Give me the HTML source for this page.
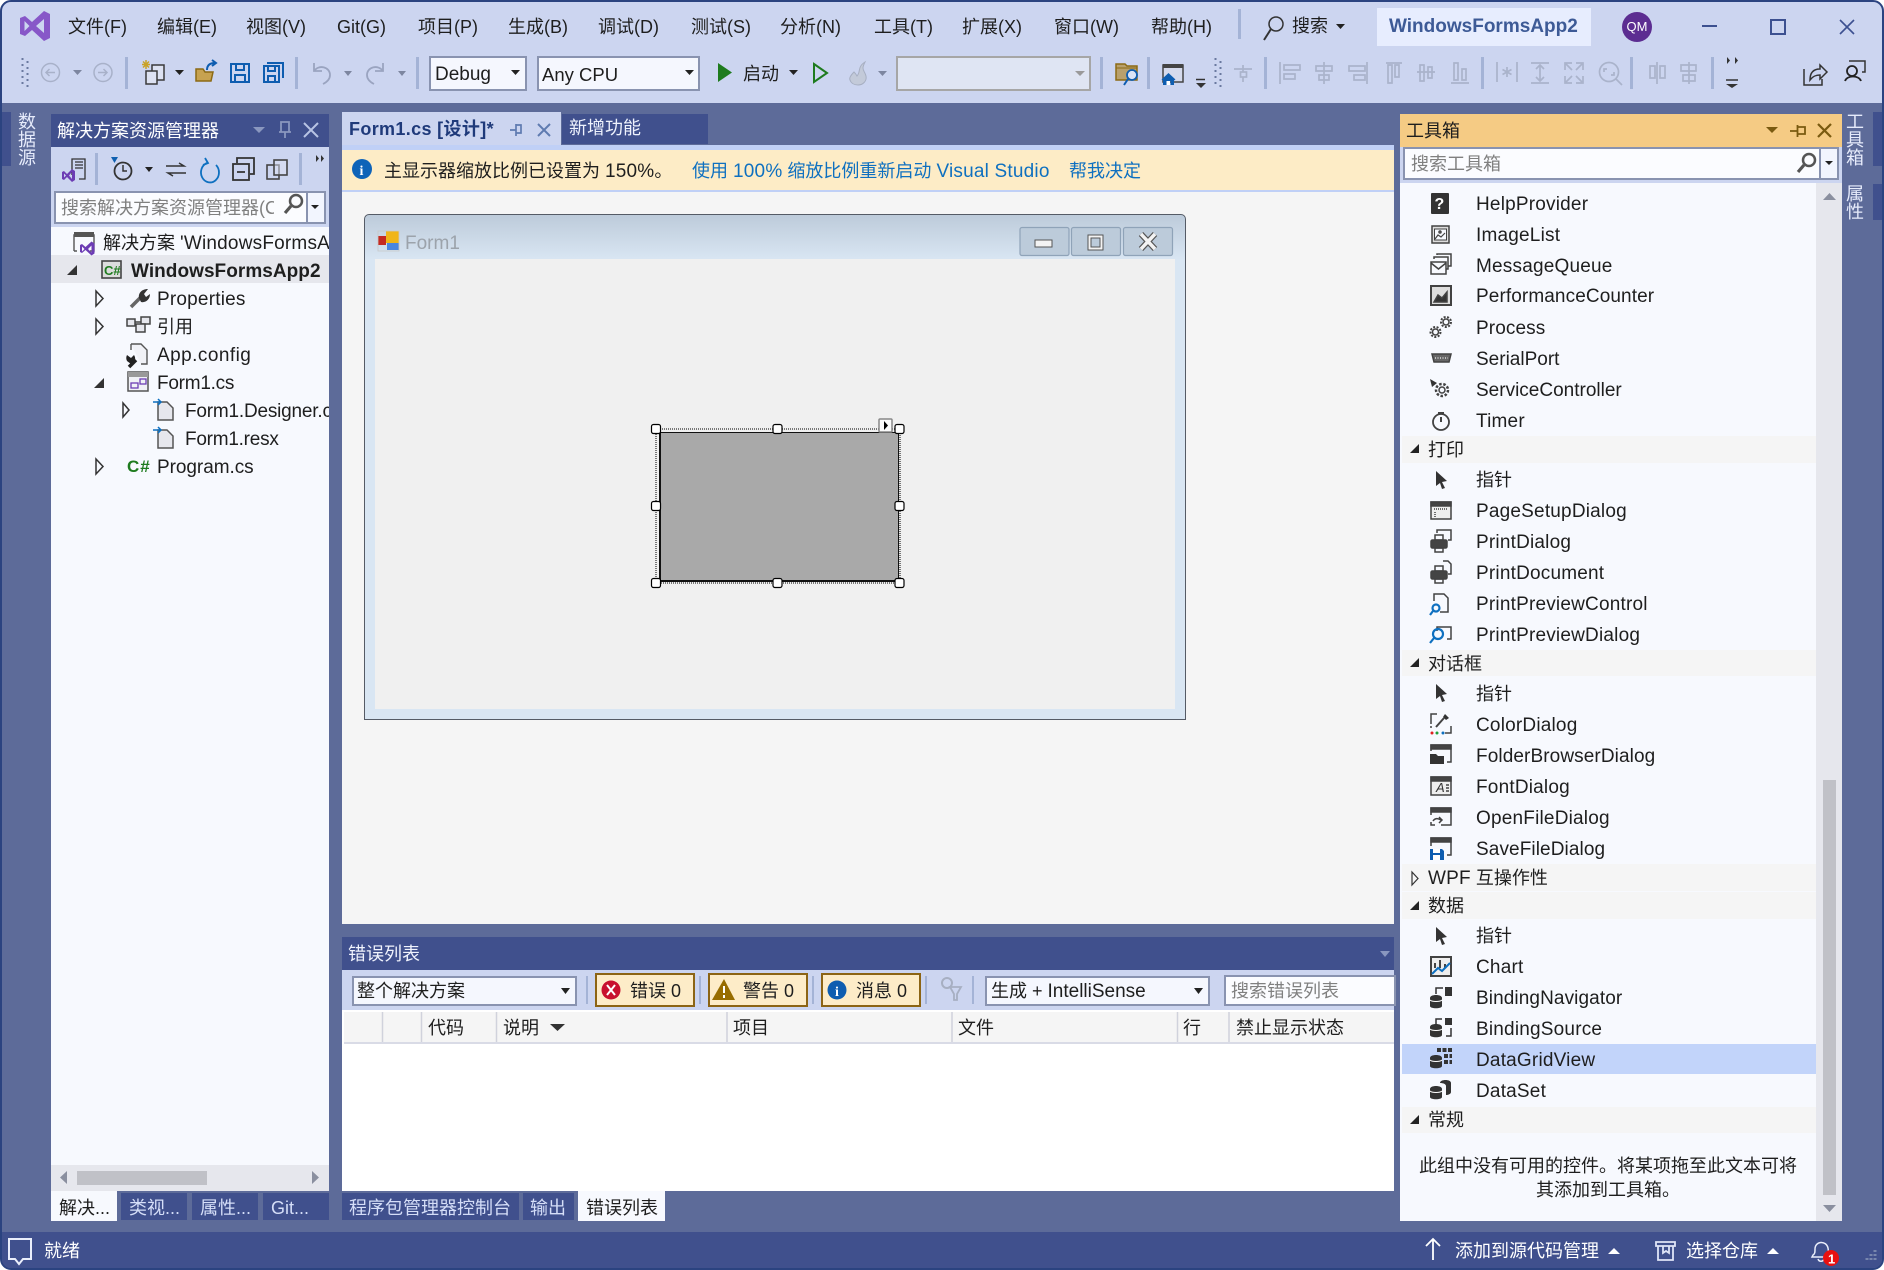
<!DOCTYPE html>
<html lang="zh"><head><meta charset="utf-8"><title>WindowsFormsApp2</title>
<style>
html,body{margin:0;padding:0;background:#fff}
body{width:1884px;height:1270px;overflow:hidden;position:relative;font-family:"Liberation Sans","Noto Sans CJK SC",sans-serif;font-size:18px;color:#1e1e1e}
#w{position:absolute;left:0;top:0;width:1884px;height:1270px;background:#5d6b99;border-radius:11px;overflow:hidden;box-sizing:border-box;border:2px solid #2b4380}
#in{position:absolute;left:-2px;top:-2px;width:1884px;height:1270px}
.b{position:absolute}
.t{position:absolute;white-space:nowrap;line-height:28px;height:28px;margin-top:1px}
.m{margin-top:0}
.l{font-size:19px;letter-spacing:.2px}
.w{color:#fff}
.v{position:absolute;writing-mode:vertical-rl;line-height:18px;color:#e6ebfb;white-space:nowrap}
svg.o{position:absolute;left:0;top:0}
.cb{position:absolute;box-sizing:border-box;border:2px solid #8993b0;background:#f5f7fe}
</style></head><body>
<div id="w"><div id="in">
<!-- top chrome -->
<div class="b" style="left:0;top:0;width:1884px;height:103px;background:#ccd5f0"></div>
<div class="b" style="left:1377px;top:8px;width:214px;height:38px;background:#e7edfe"></div>
<span class="t m" style="left:68px;top:13px">文件(F)</span>
<span class="t m" style="left:157px;top:13px">编辑(E)</span>
<span class="t m" style="left:246px;top:13px">视图(V)</span>
<span class="t m" style="left:337px;top:13px">Git(G)</span>
<span class="t m" style="left:418px;top:13px">项目(P)</span>
<span class="t m" style="left:508px;top:13px">生成(B)</span>
<span class="t m" style="left:598px;top:13px">调试(D)</span>
<span class="t m" style="left:691px;top:13px">测试(S)</span>
<span class="t m" style="left:780px;top:13px">分析(N)</span>
<span class="t m" style="left:874px;top:13px">工具(T)</span>
<span class="t m" style="left:962px;top:13px">扩展(X)</span>
<span class="t m" style="left:1054px;top:13px">窗口(W)</span>
<span class="t m" style="left:1151px;top:13px">帮助(H)</span>
<span class="t m" style="left:1292px;top:12px">搜索</span>
<span class="t m" style="left:1389px;top:13px;font-size:19px;font-weight:bold;color:#3d5a96">WindowsFormsApp2</span>
<span class="t m" style="left:1622px;top:13px;width:30px;text-align:center;font-size:13px;color:#fff;z-index:5">QM</span>
<!-- combos -->
<div class="cb" style="left:429px;top:56px;width:98px;height:35px"></div>
<span class="t" style="left:435px;top:60px;font-size:19px">Debug</span>
<div class="cb" style="left:537px;top:56px;width:163px;height:35px"></div>
<span class="t" style="left:542px;top:60px;font-size:18.500px">Any CPU</span>
<span class="t" style="left:743px;top:59px">启动</span>
<div class="cb" style="left:896px;top:56px;width:195px;height:35px;background:#dfe5f3;border-color:#a6a6a6"></div>
<!-- left strip -->
<div class="b" style="left:1px;top:112px;width:10px;height:54px;background:#40508d"></div>
<div class="v" style="left:17px;top:112px">数据源</div>
<!-- solution explorer -->
<div class="b" style="left:51px;top:114px;width:278px;height:33px;background:#40508d"></div>
<span class="t w" style="left:57px;top:116px">解决方案资源管理器</span>
<div class="b" style="left:51px;top:147px;width:278px;height:80px;background:#ccd5f0"></div>
<div class="cb" style="left:54px;top:191px;width:272px;height:33px;background:#fbfcff"></div>
<div class="b" style="left:306px;top:193px;width:2px;height:29px;background:#8993b0"></div>
<div class="b" style="left:308px;top:193px;width:16px;height:29px;background:#f2f5fe"></div>
<span class="t" style="left:61px;top:193px;color:#808080;width:213px;overflow:hidden">搜索解决方案资源管理器(C</span>
<div class="b" style="left:51px;top:227px;width:278px;height:964px;background:#f7f9fe"></div>
<div class="b" style="left:51px;top:255px;width:278px;height:28px;background:#e6e7ed"></div>
<span class="t" style="left:103px;top:228px;width:226px;overflow:hidden">解决方案 <span class="l">'WindowsFormsApp2'</span></span>
<span class="t" style="left:131px;top:257px;font-size:19px;font-weight:bold;letter-spacing:.05px">WindowsFormsApp2</span>
<span class="t l" style="left:157px;top:285px">Properties</span>
<span class="t" style="left:157px;top:312px">引用</span>
<span class="t l" style="left:157px;top:341px;letter-spacing:.45px">App.config</span>
<span class="t l" style="left:157px;top:369px;letter-spacing:-.25px">Form1.cs</span>
<span class="t l" style="left:185px;top:397px;width:144px;overflow:hidden;letter-spacing:-.2px">Form1.Designer.cs</span>
<span class="t l" style="left:185px;top:425px;letter-spacing:-.25px">Form1.resx</span>
<span class="t l" style="left:157px;top:453px;letter-spacing:-.05px">Program.cs</span>
<div class="b" style="left:51px;top:1165px;width:278px;height:26px;background:#e6e7ed"></div>
<div class="b" style="left:77px;top:1171px;width:130px;height:14px;background:#c0c1c7"></div>
<div class="b" style="left:51px;top:1191px;width:66px;height:30px;background:#f7f9fe"></div>
<div class="b" style="left:121px;top:1193px;width:66px;height:27px;background:#40508d"></div>
<div class="b" style="left:192px;top:1193px;width:66px;height:27px;background:#40508d"></div>
<div class="b" style="left:263px;top:1193px;width:66px;height:27px;background:#40508d"></div>
<span class="t m" style="left:59px;top:1194px">解决...</span>
<span class="t m" style="left:129px;top:1194px;color:#d5def8">类视...</span>
<span class="t m" style="left:200px;top:1194px;color:#d5def8">属性...</span>
<span class="t m" style="left:271px;top:1194px;color:#d5def8">Git...</span>
<!-- doc -->
<div class="b" style="left:342px;top:112px;width:219px;height:38px;background:#ccd5f0"></div>
<div class="b" style="left:562px;top:114px;width:146px;height:30px;background:#40508d"></div>
<div class="b" style="left:342px;top:145px;width:1052px;height:5px;background:#c0d0f6"></div>
<span class="t m" style="left:349px;top:115px;font-weight:bold;color:#1f3a7a;letter-spacing:.35px">Form1.cs [设计]*</span>
<span class="t w" style="left:569px;top:113px;color:#eef2fd">新增功能</span>
<div class="b" style="left:342px;top:150px;width:1052px;height:40px;background:#fdecc6"></div>
<div class="b" style="left:342px;top:190px;width:1052px;height:2px;background:#c0d0f6"></div>
<div class="b" style="left:342px;top:192px;width:1052px;height:732px;background:#f5f5f5"></div>
<span class="t" style="left:384px;top:156px">主显示器缩放比例已设置为 <span class="l">150%</span>。</span>
<span class="t" style="left:692px;top:156px;color:#0e70c0">使用 <span class="l">100%</span> 缩放比例重新启动 <span class="l">Visual Studio</span></span>
<span class="t" style="left:1069px;top:156px;color:#0e70c0">帮我决定</span>
<!-- form -->
<div class="b" style="left:364px;top:214px;width:822px;height:506px;box-sizing:border-box;border:1px solid #555b66;border-radius:5px 5px 0 0;background:linear-gradient(#bdcbda 0,#d9e6f3 45px,#d9e6f3 100%)"></div>
<div class="b" style="left:375px;top:259px;width:800px;height:450px;background:#f0f0f0"></div>
<span class="t" style="left:405px;top:229px;font-size:19px;color:#9ca3ab">Form1</span>
<div class="b" style="left:659px;top:432px;width:240px;height:150px;background:#a9a9a9;box-sizing:border-box;border:1px solid #111;border-width:1px 1px 2px 2px"></div>
<!-- error list -->
<div class="b" style="left:342px;top:937px;width:1052px;height:33px;background:#40508d"></div>
<span class="t w" style="left:348px;top:939px;color:#f0f3fd">错误列表</span>
<div class="b" style="left:342px;top:970px;width:1052px;height:40px;background:#ccd5f0"></div>
<div class="b" style="left:342px;top:1010px;width:1052px;height:181px;background:#fff"></div>
<div class="b" style="left:344px;top:1012px;width:1050px;height:30px;background:#f5f5f5;border-bottom:2px solid #d9dbe6"></div>
<div class="cb" style="left:352px;top:976px;width:225px;height:30px"></div>
<span class="t m" style="left:357px;top:977px">整个解决方案</span>
<div class="b" style="left:595px;top:973px;width:100px;height:34px;box-sizing:border-box;border:2px solid #8c6414;background:#fdecc8"></div>
<span class="t" style="left:630px;top:976px">错误 0</span>
<div class="b" style="left:708px;top:973px;width:100px;height:34px;box-sizing:border-box;border:2px solid #8c6414;background:#fdecc8"></div>
<span class="t" style="left:743px;top:976px">警告 0</span>
<div class="b" style="left:821px;top:973px;width:100px;height:34px;box-sizing:border-box;border:2px solid #8c6414;background:#fdecc8"></div>
<span class="t" style="left:856px;top:976px">消息 0</span>
<div class="cb" style="left:985px;top:976px;width:225px;height:30px"></div>
<span class="t m" style="left:991px;top:977px">生成 + <span class="l" style="letter-spacing:0">IntelliSense</span></span>
<div class="cb" style="left:1224px;top:975px;width:172px;height:31px;background:#fbfcff"></div>
<span class="t" style="left:1231px;top:976px;color:#808080">搜索错误列表</span>
<span class="t m" style="left:428px;top:1014px">代码</span>
<span class="t m" style="left:503px;top:1014px">说明</span>
<span class="t m" style="left:733px;top:1014px">项目</span>
<span class="t m" style="left:958px;top:1014px">文件</span>
<span class="t m" style="left:1183px;top:1014px">行</span>
<span class="t m" style="left:1236px;top:1014px">禁止显示状态</span>
<div class="b" style="left:342px;top:1193px;width:177px;height:27px;background:#40508d"></div>
<div class="b" style="left:523px;top:1193px;width:51px;height:27px;background:#40508d"></div>
<div class="b" style="left:578px;top:1191px;width:87px;height:30px;background:#f7f9fe"></div>
<span class="t m" style="left:349px;top:1194px;color:#d5def8">程序包管理器控制台</span>
<span class="t m" style="left:530px;top:1194px;color:#d5def8">输出</span>
<span class="t m" style="left:586px;top:1194px">错误列表</span>
<!-- toolbox -->
<div class="b" style="left:1400px;top:114px;width:442px;height:33px;background:#f5cb84"></div>
<span class="t" style="left:1406px;top:116px">工具箱</span>
<div class="b" style="left:1400px;top:147px;width:442px;height:36px;background:#ccd5f0"></div>
<div class="cb" style="left:1403px;top:147px;width:436px;height:33px;background:#fbfcff"></div>
<div class="b" style="left:1819px;top:149px;width:2px;height:29px;background:#8993b0"></div>
<div class="b" style="left:1821px;top:149px;width:16px;height:29px;background:#f2f5fe"></div>
<span class="t" style="left:1411px;top:149px;color:#808080">搜索工具箱</span>
<div class="b" style="left:1400px;top:183px;width:442px;height:1038px;background:#f7f9fe"></div>
<div class="b" style="left:1816px;top:183px;width:26px;height:1038px;background:#e6e7ed"></div>
<div class="b" style="left:1823px;top:780px;width:13px;height:415px;background:#c0c1c7"></div>
<div class="b" style="left:1402px;top:436px;width:414px;height:27px;background:#f5f5f5"></div>
<div class="b" style="left:1402px;top:650px;width:414px;height:26px;background:#f5f5f5"></div>
<div class="b" style="left:1402px;top:864px;width:414px;height:27px;background:#f5f5f5"></div>
<div class="b" style="left:1402px;top:892px;width:414px;height:27px;background:#f5f5f5"></div>
<div class="b" style="left:1402px;top:1107px;width:414px;height:26px;background:#f5f5f5"></div>
<div class="b" style="left:1402px;top:1044px;width:414px;height:30px;background:#c2d4fa"></div>
<span class="t l" style="left:1476px;top:190px">HelpProvider</span>
<span class="t l" style="left:1476px;top:221px">ImageList</span>
<span class="t l" style="left:1476px;top:252px">MessageQueue</span>
<span class="t l" style="left:1476px;top:282px;letter-spacing:.1px">PerformanceCounter</span>
<span class="t l" style="left:1476px;top:314px;letter-spacing:.1px">Process</span>
<span class="t l" style="left:1476px;top:345px;letter-spacing:0">SerialPort</span>
<span class="t l" style="left:1476px;top:376px;letter-spacing:0">ServiceController</span>
<span class="t l" style="left:1476px;top:407px">Timer</span>
<span class="t" style="left:1428px;top:435px">打印</span>
<span class="t m" style="left:1476px;top:466px">指针</span>
<span class="t l" style="left:1476px;top:497px">PageSetupDialog</span>
<span class="t l" style="left:1476px;top:528px">PrintDialog</span>
<span class="t l" style="left:1476px;top:559px">PrintDocument</span>
<span class="t l" style="left:1476px;top:590px">PrintPreviewControl</span>
<span class="t l" style="left:1476px;top:621px">PrintPreviewDialog</span>
<span class="t" style="left:1428px;top:649px">对话框</span>
<span class="t" style="left:1476px;top:679px">指针</span>
<span class="t l" style="left:1476px;top:711px">ColorDialog</span>
<span class="t l" style="left:1476px;top:742px;letter-spacing:.1px">FolderBrowserDialog</span>
<span class="t l" style="left:1476px;top:773px">FontDialog</span>
<span class="t l" style="left:1476px;top:804px">OpenFileDialog</span>
<span class="t l" style="left:1476px;top:835px;letter-spacing:.1px">SaveFileDialog</span>
<span class="t m" style="left:1428px;top:864px"><span class="l">WPF</span> 互操作性</span>
<span class="t m" style="left:1428px;top:892px">数据</span>
<span class="t m" style="left:1476px;top:922px">指针</span>
<span class="t l" style="left:1476px;top:953px">Chart</span>
<span class="t l" style="left:1476px;top:984px;letter-spacing:.1px">BindingNavigator</span>
<span class="t l" style="left:1476px;top:1015px">BindingSource</span>
<span class="t l" style="left:1476px;top:1046px">DataGridView</span>
<span class="t l" style="left:1476px;top:1077px">DataSet</span>
<span class="t m" style="left:1428px;top:1106px">常规</span>
<span class="t m" style="left:1400px;width:416px;text-align:center;top:1152px">此组中没有可用的控件。将某项拖至此文本可将</span>
<span class="t m" style="left:1400px;width:416px;text-align:center;top:1176px">其添加到工具箱。</span>
<!-- right strip -->
<div class="b" style="left:1873px;top:112px;width:9px;height:54px;background:#40508d"></div>
<div class="b" style="left:1873px;top:184px;width:9px;height:36px;background:#40508d"></div>
<div class="v" style="left:1845px;top:112px">工具箱</div>
<div class="v" style="left:1845px;top:184px">属性</div>
<!-- status bar -->
<div class="b" style="left:0;top:1232px;width:1884px;height:38px;background:#40508d"></div>
<span class="t w" style="left:44px;top:1236px">就绪</span>
<span class="t w" style="left:1455px;top:1236px">添加到源代码管理</span>
<span class="t w" style="left:1686px;top:1236px">选择仓库</span>

<svg class="o" width="1884" height="1270" viewBox="0 0 1884 1270" fill="none">
<!-- VS logo -->
<path fill="#8757c8" fill-rule="evenodd" d="M20 18l5-2 7 6 12-11 6 3v24l-6 3-12-11-7 6-5-2zM24.500 21v10l5-5zM44 19l-8 7 8 7z"/>
<!-- menu sep + search -->
<rect x="1238" y="9" width="3" height="30" fill="#a4b3d6"/>
<circle cx="1276" cy="24" r="7" stroke="#333" stroke-width="1.500"/><path d="M1271 29l-7 11" stroke="#333" stroke-width="2"/>
<path fill="#222" d="M1336 24h9l-4.500 5z"/>
<circle cx="1637" cy="27" r="15" fill="#5c2d91"/>
<path d="M1702 26h15" stroke="#3c5090" stroke-width="2"/><rect x="1771" y="20" width="14" height="14" stroke="#3c5090" stroke-width="2"/><path d="M1840 20l14 14M1854 20l-14 14" stroke="#3c5090" stroke-width="1.600"/>
<!-- grips -->
<g stroke="#6a799f" stroke-width="2"><path d="M22.500 58v28" stroke-dasharray="2 4"/><path d="M27.500 61v26" stroke-dasharray="2 4"/><path d="M1215.500 58v30" stroke-dasharray="2 4"/><path d="M1220.500 61v28" stroke-dasharray="2 4"/></g>
<!-- nav -->
<g stroke="#a8b1c9" stroke-width="1.500"><circle cx="50.500" cy="72.500" r="9"/><path d="M55 72.500h-9M49.500 69l-3.500 3.500 3.500 3.500"/><circle cx="103" cy="72.500" r="9"/><path d="M98 72.500h9M103.500 69l3.500 3.500-3.500 3.500"/></g>
<path fill="#7d86a0" d="M73 70h9l-4.500 5z"/>
<g fill="#a4b3d6"><rect x="125" y="57" width="3" height="32"/><rect x="295" y="57" width="3" height="32"/><rect x="416" y="57" width="3" height="32"/><rect x="1100" y="57" width="3" height="32"/><rect x="1147" y="57" width="3" height="32"/><rect x="1264" y="57" width="3" height="32"/><rect x="1481" y="57" width="3" height="32"/><rect x="1630" y="57" width="3" height="32"/><rect x="1711" y="57" width="3" height="32"/></g>
<!-- new project -->
<path d="M146 60v9M142 64.500h8M143 61.500l6 6M149 61.500l-6 6" stroke="#c9a227" stroke-width="1.500"/>
<rect x="152" y="65" width="12" height="15" fill="#dde2f2" stroke="#3a3a3a" stroke-width="1.500"/><rect x="146" y="71" width="11" height="13" fill="#dde2f2" stroke="#3a3a3a" stroke-width="1.500"/>
<path fill="#222" d="M175 70h9l-4.500 5z"/>
<!-- open -->
<path fill="#c7a250" stroke="#8c6a14" stroke-width="1.500" d="M196 81V69h7l2 3h8l-2 9z"/><path d="M207 70c0-5 3-7 8-7M212 60l4 3-4 3" stroke="#0e5db0" stroke-width="2"/>
<!-- save -->
<g stroke="#0e5db0" stroke-width="2"><path d="M231 64h18v18h-18zM236 64v6h8v-6M235 82v-7h10v7"/></g>
<g stroke="#0e5db0" stroke-width="2"><path d="M264 66h15v16h-15zM268 66v5h7v-5M268 82v-6h7v6M267 63h16v15"/></g>
<!-- undo redo -->
<g stroke="#9aa4c0" stroke-width="1.800"><path d="M314 63v8h8M314 71c5-7 16-4 16 4 0 4-3 7-7 9"/><path d="M383 63v8h-8M383 71c-5-7-16-4-16 4 0 4 3 7 7 9"/></g>
<path fill="#7d86a0" d="M344 71h8l-4 5zM398 71h8l-4 5z"/>
<!-- combos arrows -->
<path fill="#222" d="M511 70h9l-4.500 5zM685 70h9l-4.500 5z"/>
<path fill="#1e7b1e" d="M718 63l14 9.500-14 9.500z"/>
<path fill="#222" d="M789 70h9l-4.500 5z"/>
<path d="M814 64l13 9-13 9z" stroke="#1e7b1e" stroke-width="2"/>
<path fill="#c3cad9" stroke="#a7afc2" d="M865 62c-8 5-4 10-8 14-1-2-2-3-3-4-3 3-5 6-4 8 1 3 4 5 8 5 5 0 9-4 8-9-1-4-3-5-3-8 0-2 1-4 2-6z"/>
<path fill="#7d86a0" d="M878 71h9l-4.500 5z"/>
<path fill="#9a9a9a" d="M1075 71h10l-5 5z"/>
<!-- folder search -->
<path fill="#b9a06c" stroke="#8c6a14" stroke-width="1.500" d="M1116 80V64h9l2 2h10v14z"/><path d="M1116 68h21" stroke="#8c6a14"/><circle cx="1132" cy="75" r="5" fill="#dbe4f7" stroke="#0e5db0" stroke-width="1.800"/><path d="M1128 79l-4 6" stroke="#0e5db0" stroke-width="2"/>
<!-- home window -->
<rect x="1163" y="65" width="20" height="17" stroke="#444" stroke-width="1.500" fill="#d5daec"/><rect x="1163" y="64" width="20" height="4" fill="#444"/>
<path fill="#0e5db0" d="M1168.500 73l7 6.500-1.500 1v4.500h-3.500v-4h-4v4h-3.500v-4.500l-1.500-1z"/><rect x="1166.500" y="81" width="3.500" height="4" fill="#fff"/>
<path d="M1196 79.500h9" stroke="#333" stroke-width="1.500"/><path fill="#333" d="M1196 83h10l-5 5z"/>
<!-- layout disabled icons -->
<g stroke="#aab3cb" stroke-width="1.700">
<path d="M1234 69h18M1243 65v17"/><rect x="1240.500" y="72" width="6" height="5" fill="#ccd5f0"/>
<path d="M1280 62v22M1284 65h16v5h-16zM1284 74h11v5h-11z"/>
<path d="M1324 62v22M1316 66h16v5h-16zM1319 75h10v5h-10z"/>
<path d="M1367 62v22M1349 66h16v5h-16zM1354 75h11v5h-11z"/>
<path d="M1386 63h16M1388 65h4v18h-4zM1395 65h4v12h-4z"/>
<path d="M1417 72h18M1420 65h4v16h-4zM1428 67h4v11h-4z"/>
<path d="M1451 83h18M1454 63h4v17h-4zM1462 69h4v11h-4z"/>
<path d="M1497 62v20M1517 62v20"/><path d="M1507 67v10M1502.500 69.500l9 5M1511.500 69.500l-9 5"/>
<path d="M1531 63h18M1531 83h18M1540 65v16M1536 69l4-4 4 4M1536 77l4 4 4-4"/>
<path d="M1565 70v-7h7M1583 70v-7h-7M1565 76v7h7M1583 76v7h-7M1566 64l6 6M1582 64l-6 6M1566 82l6-6M1582 82l-6-6"/>
<circle cx="1609" cy="72" r="9.500"/><path d="M1616 79l6 6M1604 72v-3h3M1614 72v3h-3"/>
<path d="M1657 62v22M1650 66h5v12h-5zM1660 66h5v12h-5z"/>
<path d="M1689 62v22M1681 65h15v6h-15zM1683 75h12v6h-12z"/>
</g>
<path fill="#333" d="M1727 57v7l3-3.500zM1735 57v7l3-3.500zM1726 84h12l-6 4z"/><path d="M1726 80h12" stroke="#333" stroke-width="1.500"/>
<!-- share / feedback -->
<path d="M1804 69v16h18v-6M1810 80c0-8 4-11 10-11v-4l7 7-7 7v-4c-4 0-7 1-10 5z" stroke="#333" stroke-width="1.500"/>
<circle cx="1852" cy="71" r="5" stroke="#222" stroke-width="1.800"/><path d="M1845 81c2-6 14-6 16 0" stroke="#222" stroke-width="1.800"/><path d="M1849 61h16v11h-3" stroke="#333" stroke-width="1.500"/>
<!-- solution explorer title -->
<path fill="#8a97bf" d="M253 127h12l-6 6z"/><path d="M281 122h8v10h-8zM279 132h12M285 132v6" stroke="#8a97bf" stroke-width="1.800"/><path d="M304 123l14 14M318 123l-14 14" stroke="#b8c4e4" stroke-width="2"/>
<!-- explorer toolbar -->
<path d="M72 175v-16h13v20h-6" stroke="#333" stroke-width="1.300"/><path d="M75 162h8M75 165h8M75 168h8" stroke="#333" stroke-width="1.300"/>
<path fill-rule="evenodd" fill="#6c3cb4" d="M62 172l2-1 3 3 5-5 3 2v9l-3 2-5-5-3 3-2-1zM64 173.500v4l2-2zM72 172l-3 3.500 3 3.500z"/>
<rect x="95" y="153" width="3" height="32" fill="#a4b3d6"/><rect x="299" y="153" width="3" height="32" fill="#a4b3d6"/>
<path fill="#1060b0" d="M111 157h7l-3.500 6z"/><circle cx="123" cy="171" r="8.500" stroke="#333" stroke-width="1.800"/><path d="M123 165v6h4" stroke="#333" stroke-width="1.500"/>
<path fill="#222" d="M145 167h8l-4 5z"/>
<path d="M166 166h18l-5-3M186 173h-18l5 3" stroke="#333" stroke-width="1.500"/>
<path d="M207 163a9 10 0 1 0 9 2M205 158l3 5-5 2" stroke="#0e70c0" stroke-width="1.800"/>
<rect x="233" y="164" width="16" height="16" stroke="#333" stroke-width="1.800"/><path d="M237 163v-5h17v16h-4M237 172h8" stroke="#333" stroke-width="1.800"/>
<rect x="267" y="165" width="12" height="14" stroke="#444" stroke-width="1.600"/><rect x="274" y="160" width="13" height="15" stroke="#444" stroke-width="1.600" fill="#dde2f2" fill-opacity=".5"/>
<path fill="#333" d="M316 155v7l3-3.500zM321 155v7l3-3.500z"/>
<!-- search mags -->
<circle cx="296" cy="201" r="6" stroke="#555" stroke-width="2.500"/><path d="M291 206l-6 7" stroke="#555" stroke-width="3.200"/>
<path fill="#222" d="M311 205h8l-4 4z"/>
<circle cx="1809" cy="160" r="6" stroke="#555" stroke-width="2.500"/><path d="M1804 165l-6 7" stroke="#555" stroke-width="3.200"/>
<path fill="#222" d="M1825 161h8l-4 4z"/>
<!-- tree icons -->
<path fill="#333" d="M77 265v10h-10z"/>
<path d="M74 251v-16h20v16h-4M74 251h3" stroke="#555" stroke-width="1.400"/><rect x="74" y="232" width="20" height="5" fill="#555"/>
<path fill-rule="evenodd" fill="#6c3cb4" d="M80 245l2-1 3.500 3 6-5.500 3 2v10l-3 2-6-5.500-3.500 3-2-1zM82 246.500v5l2.500-2.500zM91.500 245.500l-3.500 3.500 3.500 3.500z"/>
<rect x="102" y="261" width="19" height="17" fill="#dcdcdc" stroke="#444" stroke-width="1.600"/><text x="104" y="275" font-size="13" font-family="Liberation Sans" font-weight="bold" fill="#1e7b1e">C#</text>
<g stroke="#333" stroke-width="1.500" fill="#f7f9fe"><path d="M96 291l7 7.500-7 7.500z"/><path d="M96 319l7 7.500-7 7.500z"/><path d="M96 459l7 7.500-7 7.500z"/><path d="M123 403l6 7-6 7z"/></g>
<path fill="#333" d="M104 378v10h-10z"/>
<path d="M131 307l11-11" stroke="#666" stroke-width="3.500"/><path fill="#333" d="M139 298c-1-4 2-9 9-9l-4 5 2 3 4-3c0 6-5 9-9 8z"/>
<g stroke="#444" stroke-width="1.500" fill="#e6e7ed"><rect x="127" y="319" width="8" height="7"/><rect x="141" y="317" width="9" height="7"/><rect x="136" y="324" width="9" height="8"/><path d="M135 322h6"/></g>
<path d="M131 344h10l6 6v14h-6M131 350v-6" stroke="#555" stroke-width="1.400" fill="#f0f1f6"/><path d="M129 367l7-7" stroke="#222" stroke-width="3.500"/><path fill="#222" d="M127 355l4 3 2-2 1-1c2 3 1 6 0 7l-3 2-4-3c-1-2-1-4 0-6z"/>
<rect x="128" y="372" width="20" height="19" fill="#f0f1f6" stroke="#555" stroke-width="1.500"/><rect x="128" y="372" width="20" height="5" fill="#999"/><rect x="131" y="383" width="7" height="5" stroke="#6c3cb4" stroke-width="1.300"/><rect x="140" y="379" width="6" height="5" stroke="#6c3cb4" stroke-width="1.300"/>
<g stroke="#555" stroke-width="1.500" fill="#e6e7ed"><path d="M158 402h9l6 6v12h-15z"/><path d="M158 430h9l6 6v12h-15z"/></g>
<path d="M153 402h8M158 399l3 3-3 3M153 430h8M158 427l3 3-3 3" stroke="#0e70c0" stroke-width="1.500"/>
<text x="127" y="472" font-size="17" letter-spacing="1" font-family="Liberation Sans" font-weight="bold" fill="#1e7b1e">C#</text>
<!-- h scroll arrows -->
<path fill="#8a8f9f" d="M67 1171v13l-7-6.500zM312 1171v13l7-6.500z"/>
<!-- doc tab -->
<path d="M510 130h6M516 124v12M516 125h5v8h-5" stroke="#5f7bb0" stroke-width="1.700"/><path d="M538 124l12 12M550 124l-12 12" stroke="#5f7bb0" stroke-width="2"/>
<circle cx="362" cy="169" r="10" fill="#0e63b8"/><text x="359.500" y="175" font-size="14" font-weight="bold" font-family="Liberation Serif" fill="#fff">i</text>
<!-- form -->
<rect x="378" y="236" width="8" height="9" fill="#c42a22"/><rect x="386" y="231" width="13" height="12" fill="#f0b518"/><rect x="387" y="243" width="12" height="7" fill="#4a86e0"/><path d="M378 231h21v20h-21z" stroke="#c8c8c8" stroke-width=".8"/>
<g stroke="#8fa3b8" stroke-width="1.200" fill="#bccbda"><rect x="1020" y="227.500" width="49" height="28" rx="2"/><rect x="1071.500" y="227.500" width="49" height="28" rx="2"/><rect x="1123.500" y="227.500" width="49" height="28" rx="2"/></g>
<rect x="1035" y="240" width="17" height="7" fill="#f3f3f3" stroke="#555"/><rect x="1088" y="235" width="15" height="15" fill="#f3f3f3" stroke="#555"/><rect x="1091" y="238" width="9" height="9" fill="#bccbda" stroke="#555"/>
<path d="M1141 234l14 15M1155 234l-14 15" stroke="#555" stroke-width="6"/><path d="M1141 234l14 15M1155 234l-14 15" stroke="#f3f3f3" stroke-width="3.500"/>
<!-- selection -->
<rect x="656" y="429" width="244" height="154" stroke="#777" stroke-width="2" stroke-dasharray="1 1"/>
<g fill="#fff" stroke="#000" stroke-width="1.200"><rect x="651.500" y="424.500" width="9" height="9" rx="2"/><rect x="773" y="424.500" width="9" height="9" rx="2"/><rect x="895" y="424.500" width="9" height="9" rx="2"/><rect x="651.500" y="501.500" width="9" height="9" rx="2"/><rect x="895" y="501.500" width="9" height="9" rx="2"/><rect x="651.500" y="578.500" width="9" height="9" rx="2"/><rect x="773" y="578.500" width="9" height="9" rx="2"/><rect x="895" y="578.500" width="9" height="9" rx="2"/></g>
<rect x="879" y="419" width="13" height="13" fill="#fbfbfb" stroke="#888" stroke-width="1.500" rx="1"/><path fill="#000" d="M884 421v9l4-4.500z"/>
<!-- error list -->
<path fill="#8a97bf" d="M1380 951h10l-5 6z"/>
<path fill="#222" d="M561 988h9l-4.500 6zM1194 988h9l-4.500 6z"/>
<g fill="#a4b3d6"><rect x="586" y="976" width="2" height="28"/><rect x="699" y="976" width="2" height="28"/><rect x="812" y="976" width="2" height="28"/><rect x="925" y="976" width="2" height="28"/><rect x="972" y="976" width="2" height="28"/></g>
<circle cx="611" cy="990" r="9.500" fill="#c8102e"/><path d="M607 985l8 10M615 985l-8 10" stroke="#fff" stroke-width="2"/>
<path fill="#976c00" d="M724 979l11 21h-23z"/><path d="M724 986v7M724 995v3" stroke="#fff" stroke-width="2"/>
<circle cx="837" cy="990" r="9.500" fill="#0e5db0"/><text x="835" y="996" font-size="14" font-weight="bold" font-family="Liberation Serif" fill="#fff">i</text>
<circle cx="947" cy="983" r="5" stroke="#a7afc2" stroke-width="2"/><path d="M950 987h11l-4 7v6h-3v-6z" stroke="#a7afc2" stroke-width="1.800"/>
<g stroke="#d0d2dc" stroke-width="1.500"><path d="M382.500 1012v30M421.500 1012v30M496.500 1012v30M727 1012v30M952 1012v30M1177.500 1012v30M1229 1012v30"/></g>
<path fill="#333" d="M550 1024h15l-7.500 7z"/>
<!-- toolbox title -->
<path fill="#7a5a10" d="M1766 127h12l-6 6z"/><path d="M1790 131h7M1797.500 125v12M1798 127h7v7h-7" stroke="#7a5a10" stroke-width="1.800"/><path d="M1818 124l13 13M1831 124l-13 13" stroke="#7a5a10" stroke-width="2.200"/>
<path fill="#8a8f9f" d="M1823 200l6.500-7 6.500 7zM1823 1205l6.500 7 6.500-7z"/>
<!-- group arrows -->
<path fill="#222" d="M1419 444v9h-9zM1419 658v9h-9zM1419 901v9h-9zM1419 1115v9h-9z"/>
<path stroke="#333" stroke-width="1.200" d="M1412 872l6 6.500-6 6.500z"/>
<!-- toolbox icons -->
<rect x="1431" y="193" width="18" height="21" rx="1" fill="#333"/><text x="1434.500" y="209" font-size="16" font-weight="bold" font-family="Liberation Sans" fill="#fff">?</text>
<g stroke="#424242" stroke-width="1.500">
<rect x="1432" y="226" width="17" height="17" fill="#ddd"/><rect x="1434.500" y="229" width="12" height="11" fill="#f7f9fe" stroke-width="1"/><path d="M1435 239l3-4 3 2 4-4" stroke-width="1.200"/><circle cx="1440" cy="232" r="1"/>
<path d="M1431 262h15v12h-15zM1431 263l7.500 6 7.500-6M1434 259v-2h14v12h-2M1437 255v-1h14v12h-3"/>
<rect x="1431" y="286" width="20" height="19" fill="#ddd" stroke-width="2"/><path d="M1434 302l4-7 4 3 5-6v10z" fill="#333"/>
<circle cx="1435.500" cy="332" r="3"/><circle cx="1435.500" cy="332" r="5" stroke-width="2" stroke-dasharray="2 1.500"/><circle cx="1446" cy="322" r="3"/><circle cx="1446" cy="322" r="5" stroke-width="2" stroke-dasharray="2 1.500"/>
<path d="M1432 354h19l-2 8h-15z" fill="#666"/><path d="M1435 358h13" stroke="#ddd" stroke-dasharray="1 1.500"/>
<circle cx="1442" cy="390" r="3"/><circle cx="1442" cy="390" r="6" stroke-width="2.500" stroke-dasharray="2.500 1.700"/><path fill="#333" stroke="none" d="M1430 379l7 4-5 4z"/>
<circle cx="1441" cy="422" r="8" stroke-width="1.800"/><path d="M1441 417v5M1438 413h6" stroke-width="2"/>
<rect x="1431" y="502" width="20" height="17" fill="#eee"/><rect x="1431" y="502" width="20" height="4" fill="#444"/><path d="M1434 509h13M1435 512v5" stroke-dasharray="1 1"/>
<path d="M1437 533v-3h14v10h-3"/><rect x="1431" y="540" width="16" height="8" rx="1.500" fill="#444"/><rect x="1435" y="535" width="8" height="5"/><rect x="1435" y="548" width="8" height="4"/>
<path d="M1443 561h5l3 3v10h-3"/><rect x="1431" y="571" width="16" height="8" rx="1.500" fill="#444"/><rect x="1435" y="566" width="8" height="5"/><rect x="1435" y="579" width="8" height="4"/>
<path d="M1434 601v-7h10l4 4v14h-8"/>
<path d="M1437 631v-4h14v12h-4"/>
</g>
<g stroke="#0e70c0" stroke-width="2.200"><circle cx="1436" cy="608" r="3.500"/><path d="M1433 611l-3 4"/><circle cx="1438" cy="634" r="5"/><path d="M1434 638l-4 5"/></g>
<path fill="#333" d="M1436 471l11 10-5 1 3 6-3 1-2-6-4 3zM1436 684l11 10-5 1 3 6-3 1-2-6-4 3zM1436 927l11 10-5 1 3 6-3 1-2-6-4 3z"/>
<g stroke="#424242" stroke-width="1.500">
<path d="M1431 724v-10h6M1451 726v7h-6M1431 726v2"/><path d="M1436 727l8-9" stroke-width="2"/><path fill="#333" stroke="none" d="M1445 714l4 4-3 2-3-3z"/>
<path d="M1431 751v-6h20v17h-4"/><rect x="1431" y="745" width="20" height="4" fill="#444"/><path fill="#333" stroke="none" d="M1430 754h6l2 2h6v8h-14z"/>
<rect x="1431" y="777" width="20" height="18" fill="#eee"/><rect x="1431" y="777" width="20" height="4" fill="#444"/><path d="M1446 785h3M1446 788h3M1446 791h3"/>
<path d="M1431 815v-7h20v17h-10M1431 822v3h4"/><rect x="1431" y="808" width="20" height="4" fill="#444"/><path d="M1433 821c2-3 5-3 8-1M1439 817l3 3-3 3"/>
<path d="M1431 846v-8h20v17h-4"/><rect x="1431" y="838" width="20" height="4" fill="#444"/>
<rect x="1431" y="957" width="20" height="19" fill="#eee" stroke-width="2"/><path d="M1435 968v-5M1440 968v-8M1445 968v-4" stroke-width="2"/>
</g>
<text x="1436" y="792" font-size="13" font-style="italic" font-family="Liberation Sans" fill="#333">A</text>
<circle cx="1432" cy="733" r="1.500" fill="#e02020"/><circle cx="1437" cy="733" r="1.500" fill="#1e9e3a"/><circle cx="1443" cy="733" r="1.500" fill="#0e70c0"/>
<path fill="#0e5db0" d="M1430 849h12l2 2v9h-14z"/><rect x="1433" y="849" width="7" height="4" fill="#fff"/><rect x="1433" y="855" width="7" height="5" fill="#fff"/>
<path d="M1432 974l6-6 4 3 8-8" stroke="#0e70c0" stroke-width="2"/>
<!-- DB icons -->
<path fill="#333" d="M1430 998c0-4 12-4 12 0v8c0 3-12 3-12 0z"/><path d="M1430 1000c2 2 10 2 12 0" stroke="#fff"/>
<rect x="1445" y="987" width="7" height="9" fill="#333"/><path d="M1436 994v-6h7" stroke="#333" stroke-width="1.500"/>
<path fill="#333" d="M1430 1027c0-4 12-4 12 0v8c0 3-12 3-12 0z"/><path d="M1430 1029c2 2 10 2 12 0" stroke="#fff"/><rect x="1445" y="1018" width="7" height="7" fill="#333"/><path d="M1436 1024v-5h6M1451 1028v8h-5" stroke="#333" stroke-width="1.500"/>
<path fill="#333" d="M1430 1058c0-4 12-4 12 0v8c0 3-12 3-12 0z"/><path d="M1430 1060c2 2 10 2 12 0" stroke="#fff"/><path d="M1437 1050h15M1437 1056h0M1444 1056h8M1444 1062h8" stroke="#333" stroke-width="4" stroke-dasharray="4 1.500"/>
<path fill="#333" d="M1440 1083c0-4 11-4 11 0v9c0 2-3 3-5 3v-9c0-2-3-3-6-3z"/>
<path fill="#333" d="M1430 1089c0-4 12-4 12 0v8c0 3-12 3-12 0z"/><path d="M1430 1091c2 2 10 2 12 0" stroke="#fff"/>
<!-- status bar -->
<path d="M9 1239h22v20h-8l-4 5-4-5h-6z" stroke="#eaeefb" stroke-width="2"/>
<path d="M1433 1260v-21M1426 1246l7-7 7 7" stroke="#fff" stroke-width="1.800"/>
<path fill="#fff" d="M1608 1254l6-6 6 6zM1767 1254l6-6 6 6z"/>
<path d="M1656 1242h19v4h-19zM1658 1246v14h15v-14M1663 1246v7l3-2 3 2v-7" stroke="#dfe5f8" stroke-width="1.800"/>
<path d="M1813 1255c2-1 2-3 2-6 0-8 11-9 13-1l1 7 2 2h-19zM1818 1259c1 3 5 3 6 0" stroke="#eaeefb" stroke-width="1.500"/>
<circle cx="1831" cy="1258" r="8" fill="#e81010"/><text x="1828" y="1263.500" font-size="13" font-weight="bold" font-family="Liberation Sans" fill="#fff">1</text>
<path d="M1875 1250v2M1871 1254v2M1875 1254v2M1867 1258v2M1871 1258v2M1875 1258v2" stroke="#7886ad" stroke-width="3"/>
</svg>
</div></div>
</body></html>
